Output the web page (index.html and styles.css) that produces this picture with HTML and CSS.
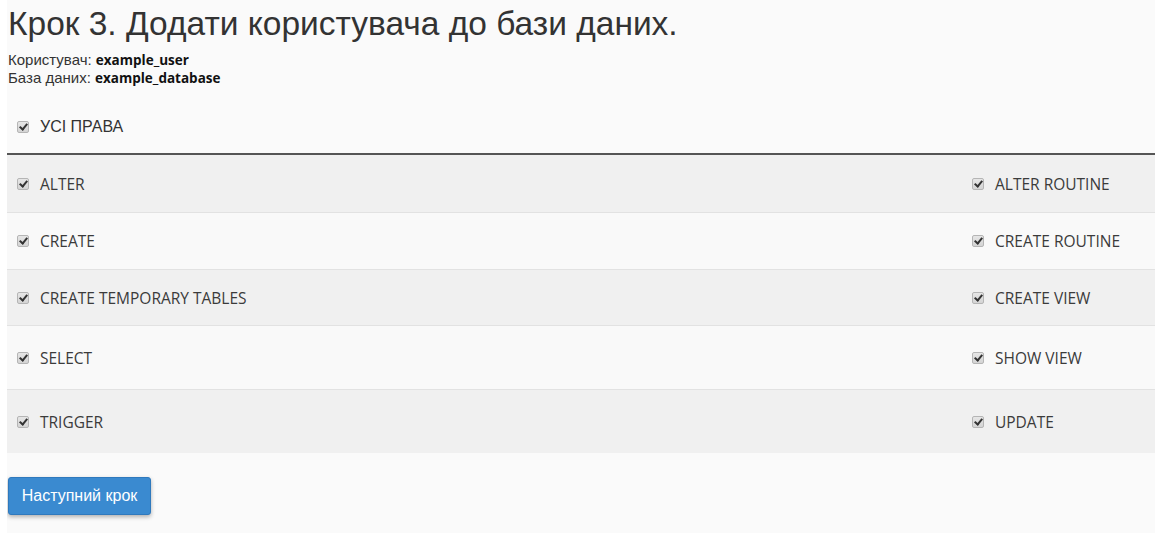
FILE: index.html
```html
<!DOCTYPE html>
<html lang="uk">
<head>
  <meta charset="UTF-8">
  <title>Додати користувача до бази даних</title>
  <link rel="stylesheet" href="styles.css">
</head>
<body>

  <div class="page">
    <h1 class="title">Крок 3. Додати користувача до бази даних.</h1>

    <div class="info">
      <div>Користувач: <b>example_user</b></div>
      <div>База даних: <b>example_database</b></div>
    </div>

    <div class="all-row">
      <label class="check-label"><span class="check"></span>УСІ ПРАВА</label>
    </div>

    <div class="privileges">
      <div class="row">
        <label class="priv"><span class="check"></span>ALTER</label>
        <label class="priv"><span class="check"></span>ALTER ROUTINE</label>
      </div>
      <div class="row">
        <label class="priv"><span class="check"></span>CREATE</label>
        <label class="priv"><span class="check"></span>CREATE ROUTINE</label>
      </div>
      <div class="row">
        <label class="priv"><span class="check"></span>CREATE TEMPORARY TABLES</label>
        <label class="priv"><span class="check"></span>CREATE VIEW</label>
      </div>
      <div class="row tall">
        <label class="priv"><span class="check"></span>SELECT</label>
        <label class="priv"><span class="check"></span>SHOW VIEW</label>
      </div>
      <div class="row tall">
        <label class="priv"><span class="check"></span>TRIGGER</label>
        <label class="priv"><span class="check"></span>UPDATE</label>
      </div>
    </div>

    <button class="next-btn">Наступний крок</button>
  </div>

</body>
</html>
```

FILE: styles.css
```css
body {
  margin: 0;
  background: #ffffff;
  font-family: 'Liberation Sans', Arial, sans-serif;
  color: #333333;
}

.page {
  margin-left: 7px;
  height: 533px;
  background: #fafafa;
  overflow: hidden;
}

.title {
  margin: 0;
  padding: 5px 0 0 1px;
  font-size: 33.5px;
  font-weight: normal;
  line-height: 38px;
  color: #333;
}

.info {
  margin-top: 8px;
  padding-left: 1px;
  font-size: 15px;
  line-height: 17px;
  color: #333;
}

.info b {
  font-family: 'Open Sans', sans-serif;
  font-size: 13.5px;
  color: #111;
}

.all-row {
  height: 53px;
  margin-top: 13px;
  display: flex;
  align-items: center;
  padding-left: 10px;
  border-bottom: 2px solid #555;
  box-shadow: 0 1px 0 #aaa;
}

.check-label {
  display: flex;
  align-items: center;
  font-size: 16px;
  color: #333;
}

.check {
  position: relative;
  display: inline-block;
  width: 10px;
  height: 10px;
  margin-right: 11px;
  border: 1px solid #b5b5b5;
  border-radius: 2px;
  background: linear-gradient(#e6e6e6, #d4d4d4);
  flex: none;
}

.check::after {
  content: '';
  position: absolute;
  left: 3px;
  top: 0px;
  width: 3px;
  height: 6px;
  border: solid #333;
  border-width: 0 2px 2px 0;
  transform: rotate(40deg);
}

.row {
  display: grid;
  grid-template-columns: 1fr 193px;
  align-items: center;
  height: 56px;
  border-bottom: 1px solid #e2e2e2;
  background: #f0f0f0;
}

.row:nth-child(even) {
  background: #f9f9f9;
}

.row.tall {
  height: 63px;
}

.row:last-child {
  border-bottom: none;
}

.row:nth-child(1) { height: 57px; }
.row:nth-child(3) { height: 55px; }

.priv {
  display: flex;
  align-items: center;
  padding-left: 10px;
  font-family: 'Open Sans', sans-serif;
  font-size: 15.5px;
  color: #3b3b3b;
}

.next-btn {
  margin: 24px 0 0 1px;
  width: 143px;
  height: 38px;
  border: 1px solid #2f79bd;
  border-radius: 3px;
  background: #3a8ad0;
  color: #fff;
  font-family: 'Liberation Sans', Arial, sans-serif;
  font-size: 16px;
  box-shadow: 0 2px 4px rgba(0, 0, 0, 0.3);
  cursor: pointer;
}
```
